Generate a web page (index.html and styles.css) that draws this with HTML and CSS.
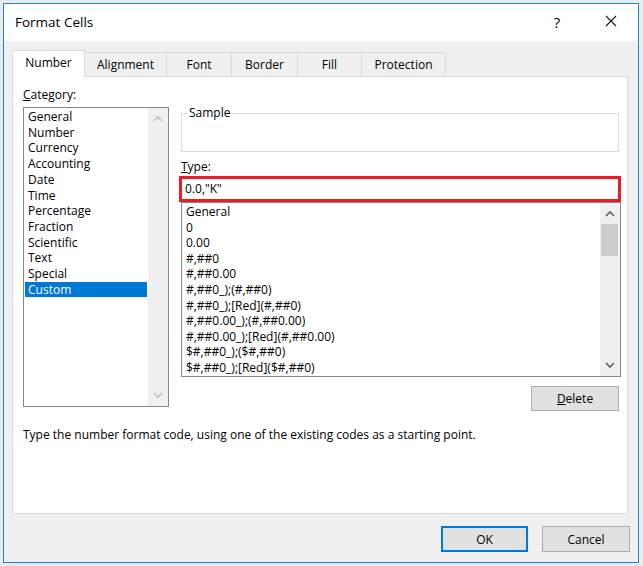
FILE: index.html
```html
<!DOCTYPE html>
<html>
<head>
<meta charset="utf-8">
<title>Format Cells</title>
<link rel="stylesheet" href="styles.css">
</head>
<body>
<div class="window">
  <div class="titlebar">
    <span class="title">Format Cells</span>
    <span class="help">?</span>
    <span class="close"><svg width="12" height="12" viewBox="0 0 12 12"><path d="M1 1L11 11M11 1L1 11" stroke="#1a1a1a" stroke-width="1.1" fill="none"/></svg></span>
  </div>
  <div class="content">
    <div class="tabs">
      <div class="tab tab-number active">Number</div>
      <div class="tab tab-alignment">Alignment</div>
      <div class="tab tab-font">Font</div>
      <div class="tab tab-border">Border</div>
      <div class="tab tab-fill">Fill</div>
      <div class="tab tab-protection">Protection</div>
    </div>
    <div class="panel">
      <div class="main">
        <div class="left">
          <div class="label"><u>C</u>ategory:</div>
          <div class="listbox cat">
            <ul class="items cat-items">
              <li>General</li>
              <li>Number</li>
              <li>Currency</li>
              <li>Accounting</li>
              <li>Date</li>
              <li>Time</li>
              <li>Percentage</li>
              <li>Fraction</li>
              <li>Scientific</li>
              <li>Text</li>
              <li>Special</li>
              <li class="sel">Custom</li>
            </ul>
            <div class="scrollbar disabled">
              <div class="arrow"><svg width="10" height="7" viewBox="0 0 10 7"><polyline points="1,6 5,2 9,6" fill="none" stroke="currentColor" stroke-width="1.6"/></svg></div>
              <div class="track"></div>
              <div class="arrow"><svg width="10" height="7" viewBox="0 0 10 7"><polyline points="1,1 5,5 9,1" fill="none" stroke="currentColor" stroke-width="1.6"/></svg></div>
            </div>
          </div>
        </div>
        <div class="right">
          <fieldset class="sample"><legend>Sample</legend></fieldset>
          <div class="label type-label"><u>T</u>ype:</div>
          <div class="typebox">0.0,"K"</div>
          <div class="listbox types">
            <ul class="items type-items">
              <li>General</li>
              <li>0</li>
              <li>0.00</li>
              <li>#,##0</li>
              <li>#,##0.00</li>
              <li>#,##0_);(#,##0)</li>
              <li>#,##0_);[Red](#,##0)</li>
              <li>#,##0.00_);(#,##0.00)</li>
              <li>#,##0.00_);[Red](#,##0.00)</li>
              <li>$#,##0_);($#,##0)</li>
              <li>$#,##0_);[Red]($#,##0)</li>
            </ul>
            <div class="scrollbar">
              <div class="arrow"><svg width="10" height="7" viewBox="0 0 10 7"><polyline points="1,6 5,2 9,6" fill="none" stroke="currentColor" stroke-width="1.6"/></svg></div>
              <div class="track"><div class="thumb"></div></div>
              <div class="arrow"><svg width="10" height="7" viewBox="0 0 10 7"><polyline points="1,1 5,5 9,1" fill="none" stroke="currentColor" stroke-width="1.6"/></svg></div>
            </div>
          </div>
          <div class="delete-row"><button class="btn btn-delete"><u>D</u>elete</button></div>
        </div>
      </div>
      <div class="hint">Type the number format code, using one of the existing codes as a starting point.</div>
    </div>
    <div class="footer">
      <button class="btn btn-ok">OK</button>
      <button class="btn btn-cancel">Cancel</button>
    </div>
  </div>
</div>
</body>
</html>
```
FILE: styles.css
```css
html, body {
  margin: 0;
  padding: 0;
}
body {
  background: #ebebeb;
  font-family: "Open Sans", "Noto Sans", sans-serif;
  font-size: 12px;
  color: #000;
  width: 643px;
  height: 566px;
  overflow: hidden;
}
.window {
  margin: 3px;
  width: 634px;
  height: 558px;
  border: 1px solid #1a86d9;
  background: #f0f0f0;
  display: flex;
  flex-direction: column;
}
.titlebar {
  height: 37px;
  background: #fff;
  display: flex;
  align-items: center;
  flex: none;
}
.title {
  flex: 1;
  margin-left: 11px;
  font-size: 13.5px;
  margin-top: -1px;
}
.help {
  width: 30px;
  text-align: center;
  font-size: 15px;
  margin-top: -2px;
}
.close {
  width: 46px;
  margin-left: 16px;
  margin-right: 4px;
  display: flex;
  justify-content: center;
  align-items: center;
  margin-top: -3px;
}
.content {
  flex: 1;
  padding: 9px 10px 0 8px;
  display: flex;
  flex-direction: column;
}
.tabs {
  display: flex;
  align-items: flex-end;
  height: 26px;
  position: relative;
  z-index: 1;
}
.tab {
  box-sizing: border-box;
  height: 24px;
  border: 1px solid #d9d9d9;
  border-bottom: none;
  border-left: none;
  background: #f0f0f0;
  display: flex;
  align-items: center;
  justify-content: center;
}
.tab-number { width: 73px; border-left: 1px solid #d9d9d9; }
.tab-alignment { width: 82px; }
.tab-font { width: 65px; }
.tab-border { width: 66px; }
.tab-fill { width: 64px; }
.tab-protection { width: 84px; }
.tab.active {
  height: 27px;
  margin-bottom: -1px;
  background: #fff;
  padding-bottom: 3px;
}
.panel {
  box-sizing: border-box;
  height: 438px;
  border: 1px solid #d9d9d9;
  background: #fff;
  padding: 10px 0 0 10px;
  flex: none;
}
.main {
  display: flex;
  gap: 12px;
}
.left {
  width: 146px;
}
.right {
  width: 440px;
}
.label {
  line-height: 16px;
  height: 16px;
  margin-bottom: 4px;
}
.listbox {
  box-sizing: border-box;
  border: 1px solid #828790;
  background: #fff;
  display: flex;
}
.cat {
  height: 300px;
}
.items {
  list-style: none;
  margin: 0;
  padding: 1px;
  flex: 1;
  overflow: hidden;
}
.items li {
  padding-left: 3px;
  white-space: nowrap;
}
.cat-items li {
  line-height: 15.7px;
}
.type-items li {
  line-height: 15.6px;
}
.items li.sel {
  background: #0078d7;
  color: #fff;
}
.scrollbar {
  width: 20px;
  background: #f0f0f0;
  display: flex;
  flex-direction: column;
  color: #606060;
}
.scrollbar.disabled {
  color: #bfbfbf;
}
.arrow {
  height: 21px;
  display: flex;
  align-items: center;
  justify-content: center;
}
.track {
  flex: 1;
}
.thumb {
  height: 32px;
  margin: 0 2px 0 1px;
  background: #cdcdcd;
}
.sample {
  box-sizing: border-box;
  margin: 18px 2px 0 0;
  padding: 0;
  height: 47px;
  border: 1px solid #dcdcdc;
  min-width: 0;
}
.sample legend {
  padding: 0 1px;
  margin-left: 6px;
  line-height: 16px;
}
.type-label {
  margin-top: 7px;
  margin-bottom: 1px;
}
.typebox {
  box-sizing: border-box;
  margin-left: -2px;
  width: 442px;
  height: 26px;
  border: 3px solid #ec1c24;
  padding-left: 3px;
  line-height: 20px;
  background: #fff;
}
.types {
  height: 175px;
}
.delete-row {
  display: flex;
  justify-content: flex-end;
  margin-top: 9px;
  padding-right: 2px;
}
.btn {
  box-sizing: border-box;
  font: inherit;
  color: #000;
  padding: 0;
  background: #e1e1e1;
  border: 1px solid #adadad;
}
.btn-delete {
  width: 88px;
  height: 25px;
}
.hint {
  margin-top: 16px;
  line-height: 16px;
}
.footer {
  display: flex;
  justify-content: flex-end;
  gap: 14px;
  margin-top: 12px;
  margin-right: -2px;
}
.btn-ok {
  width: 87px;
  height: 26px;
  border: 2px solid #0078d7;
}
.btn-cancel {
  width: 88px;
  height: 26px;
}
```
